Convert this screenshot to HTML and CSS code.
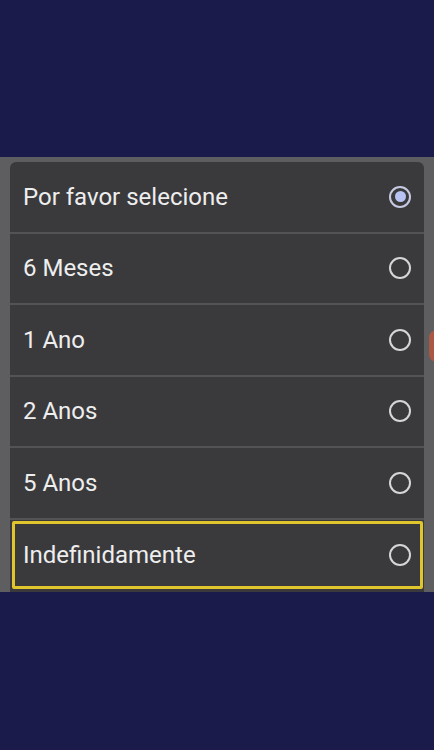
FILE: index.html
```html
<!DOCTYPE html>
<html lang="pt">
<head>
<meta charset="utf-8">
<title>Selecione</title>
<link rel="stylesheet" href="styles.css">
</head>
<body>
<div class="top"></div>
<div class="band">
  <div class="blob"></div>
  <div class="sheet">
    <div class="row"><span class="label">Por favor selecione</span><span class="radio selected"><span class="dot"></span></span></div>
    <div class="row"><span class="label">6 Meses</span><span class="radio"></span></div>
    <div class="row"><span class="label">1 Ano</span><span class="radio"></span></div>
    <div class="row"><span class="label">2 Anos</span><span class="radio"></span></div>
    <div class="row"><span class="label">5 Anos</span><span class="radio"></span></div>
    <div class="last">
      <div class="row focus"><span class="label">Indefinidamente</span><span class="radio"></span></div>
    </div>
  </div>
</div>
<div class="bottom"></div>
</body>
</html>
```
FILE: styles.css
```css
html, body {
  margin: 0;
  padding: 0;
  background: #1b1b4b;
  font-family: Roboto, "Noto Sans", "Liberation Sans", sans-serif;
}
.top {
  height: 157px;
  background: #1b1b4b;
}
.band {
  position: relative;
  height: 435px;
  background: #5e5e60;
  padding: 5px 10px 0 10px;
  box-sizing: border-box;
  overflow: hidden;
}
.blob {
  position: absolute;
  right: -10px;
  top: 173px;
  width: 15px;
  height: 32px;
  border-radius: 8px;
  background: #c4553a;
  opacity: 0.75;
}
.sheet {
  position: relative;
  height: 430px;
  background: #3a3a3d;
  border-radius: 6px 6px 0 0;
  display: flex;
  flex-direction: column;
}
.row {
  height: 69.5px;
  border-bottom: 2px solid #535356;
  display: flex;
  align-items: center;
  justify-content: space-between;
  padding: 0 13px 0 13px;
  flex: none;
}
.label {
  color: #eeeeee;
  font-size: 24px;
  letter-spacing: 0;
}
.radio {
  width: 22px;
  height: 22px;
  box-sizing: border-box;
  border: 2.5px solid #d6d6d8;
  border-radius: 50%;
  display: flex;
  align-items: center;
  justify-content: center;
}
.radio.selected {
  border-color: #c6cbe2;
}
.dot {
  width: 11px;
  height: 11px;
  border-radius: 50%;
  background: #b8c3f3;
}
.last {
  padding: 1px 1px 0 2px;
}
.row.focus {
  height: 68px;
  border: 3px solid #e0c62c;
  border-radius: 2px;
  padding: 0 9px 0 8px;
  box-sizing: border-box;
}
.bottom {
  height: 158px;
  background: #1b1b4b;
}
```
